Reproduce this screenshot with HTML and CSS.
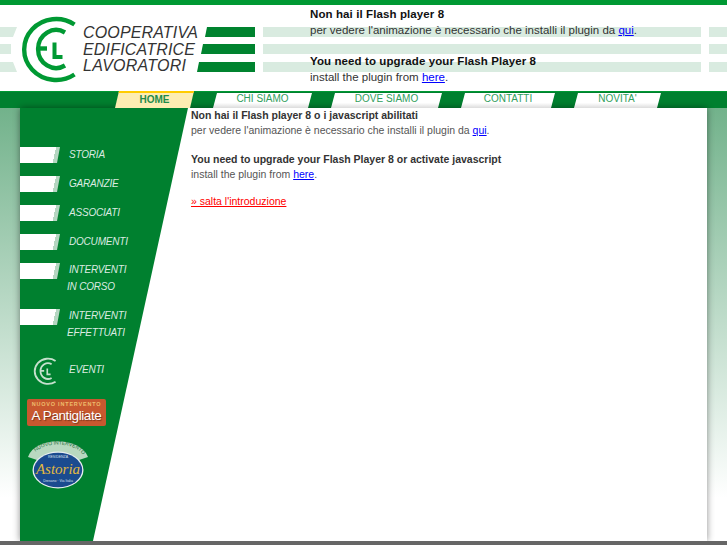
FILE: index.html
```html
<!DOCTYPE html>
<html lang="it">
<head>
    <meta charset="UTF-8">
    <title>Cooperativa Edificatrice Lavoratori</title>
    <link rel="stylesheet" href="styles.css">
</head>
<body>

    <!-- Logo mark, used in header and sidebar -->
    <svg class="defs" width="0" height="0">
        <symbol id="cel-mark" viewBox="20 15 58 70">
            <g fill="none" stroke="currentColor" stroke-width="4.4">
                <path d="M74.5 24.5A32 30.5 0 1 0 74.5 74.5"/>
                <path d="M65 32.5A18 19 0 1 0 65 65.5"/>
                <path d="M38 48.5H47"/>
            </g>
            <path fill="currentColor" d="M52.5 42.5H56.5V55H62.5V59H52.5Z"/>
        </symbol>
    </svg>

    <div class="topbar"></div>

    <!-- Header -->
    <div class="header">
        <svg class="logo" width="263" height="86" viewBox="0 5 263 86">
            <rect x="0" y="5" width="263" height="86" fill="#fff"/>
            <polygon points="0,27 17,27 13,37 0,37" fill="#d9ebe0"/>
            <polygon points="0,44 11,44 11,54 0,54" fill="#d9ebe0"/>
            <polygon points="0,62 13,62 17,72 0,72" fill="#d9ebe0"/>
            <use href="#cel-mark" x="20" y="15" width="58" height="70" color="#009933"/>
            <text class="logo-text" x="83" y="38" textLength="115">COOPERATIVA</text>
            <text class="logo-text" x="83" y="55" textLength="112">EDIFICATRICE</text>
            <text class="logo-text" x="83" y="71" textLength="103">LAVORATORI</text>
            <polygon points="207,27 255,27 255,37 205,37" fill="#00832f"/>
            <polygon points="203,44 255,44 255,54 201,54" fill="#00832f"/>
            <polygon points="199,62 255,62 255,72 197,72" fill="#00832f"/>
        </svg>
        <div class="flash-note">
            <p><strong>Non hai il Flash player 8</strong><br>
            per vedere l'animazione è necessario che installi il plugin da <a href="#">qui</a>.</p>
            <p><strong>You need to upgrade your Flash Player 8</strong><br>
            install the plugin from <a href="#">here</a>.</p>
        </div>
    </div>

    <!-- Navbar -->
    <div class="navbar">
        <a href="#" class="tab active">HOME</a>
        <a href="#" class="tab">CHI SIAMO</a>
        <a href="#" class="tab">DOVE SIAMO</a>
        <a href="#" class="tab">CONTATTI</a>
        <a href="#" class="tab">NOVITA'</a>
    </div>

    <div class="page">
        <div class="content">

            <!-- Sidebar -->
            <div class="sidebar">
                <a href="#" class="side-item"><span class="flag"></span><span class="side-label">STORIA</span></a>
                <a href="#" class="side-item"><span class="flag"></span><span class="side-label">GARANZIE</span></a>
                <a href="#" class="side-item"><span class="flag"></span><span class="side-label">ASSOCIATI</span></a>
                <a href="#" class="side-item"><span class="flag"></span><span class="side-label">DOCUMENTI</span></a>
                <a href="#" class="side-item"><span class="flag"></span><span class="side-label two-lines">INTERVENTI<span class="second-line">IN CORSO</span></span></a>
                <a href="#" class="side-item"><span class="flag"></span><span class="side-label two-lines">INTERVENTI<span class="second-line">EFFETTUATI</span></span></a>

                <a href="#" class="side-event">
                    <svg class="event-mark" width="26" height="29"><use href="#cel-mark" width="26" height="29"/></svg>
                    <span class="side-label">EVENTI</span>
                </a>

                <a href="#" class="promo-pantigliate">
                    <span class="promo-small">NUOVO INTERVENTO</span>
                    <span class="promo-big">A Pantigliate</span>
                </a>

                <svg class="promo-astoria" width="62" height="50" viewBox="0 0 62 50">
                    <path d="M1 17C8 -4 53 -4 61 17L52 20H10Z" fill="#b9d8c0"/>
                    <path id="astoria-arc" d="M6 15C15 1 47 1 56 15" fill="none"/>
                    <text class="astoria-arc-text"><textPath href="#astoria-arc" startOffset="4">NUOVO INTERVENTO</textPath></text>
                    <ellipse cx="31" cy="30" rx="25.5" ry="18.5" fill="#e8eef0"/>
                    <ellipse cx="31" cy="30" rx="24.2" ry="17.2" fill="#1b4b8f"/>
                    <text class="astoria-small" x="31" y="18" text-anchor="middle">RESIDENZA</text>
                    <text class="astoria-name" x="31" y="34" text-anchor="middle">Astoria</text>
                    <text class="astoria-small" x="31" y="42" text-anchor="middle">Dresano · Via Italia</text>
                </svg>
            </div>

            <!-- Main Content -->
            <div class="main">
                <p><strong>Non hai il Flash player 8 o i javascript abilitati</strong><br>
                per vedere l'animazione è necessario che installi il plugin da <a href="#">qui</a>.</p>
                <p><strong>You need to upgrade your Flash Player 8 or activate javascript</strong><br>
                install the plugin from <a href="#">here</a>.</p>
                <p class="skip"><a href="#">» salta l'introduzione</a></p>
            </div>
        </div>
    </div>

    <div class="bottombar"></div>

</body>
</html>
```

FILE: styles.css
```css
:root {
    --green: #009933;
    --green-dark: #00802f;
    --pale: #d9ebe0;
    --side-text: #dcebe1;
}

* {
    margin: 0;
    padding: 0;
    box-sizing: border-box;
}

body {
    font-family: 'Liberation Sans', Arial, sans-serif;
    background: #fff;
    height: 545px;
    overflow: hidden;
}

a {
    color: #0000ff;
}

.defs {
    display: block;
    height: 0;
}

.topbar {
    height: 5px;
    background: var(--green);
}

.header {
    height: 86px;
    display: flex;
    background:
        linear-gradient(#fff, #fff) 701px 0 / 8px 100% no-repeat,
        linear-gradient(var(--pale), var(--pale)) 0 22px / 100% 10px no-repeat,
        linear-gradient(var(--pale), var(--pale)) 0 39px / 100% 10px no-repeat,
        linear-gradient(var(--pale), var(--pale)) 0 57px / 100% 10px no-repeat;
}

.logo {
    display: block;
    flex: none;
}

.logo-text {
    font-family: 'Liberation Sans', Arial, sans-serif;
    font-style: italic;
    font-size: 16px;
    fill: #333;
}

.flash-note {
    margin-left: 47px;
    padding-top: 1px;
    font-size: 11.5px;
    line-height: 16px;
    color: #333;
}

.flash-note strong {
    color: #111;
    letter-spacing: 0.1px;
}

.flash-note p + p {
    margin-top: 15px;
}

.navbar {
    height: 17px;
    padding: 2px 0 0 115px;
    display: grid;
    grid-template-columns: 79px 99px 111px 94px 87px;
    gap: 19px;
    background: var(--green-dark);
    box-shadow: inset 0 1px 0 var(--green);
}

.tab {
    display: block;
    font-size: 10px;
    line-height: 11px;
    text-align: center;
    text-decoration: none;
    color: #2f9e5c;
    background: linear-gradient(#fff 65%, #dcdcdc);
    clip-path: polygon(4px 0, 100% 0, calc(100% - 4px) 100%, 0 100%);
}

.tab.active {
    margin-top: -2px;
    padding-top: 1px;
    font-weight: bold;
    color: #1f8a4a;
    border-top: 2px solid #ffcc00;
    background: #fdedb2;
}

.page {
    height: 433px;
    padding: 0 20px;
    background: linear-gradient(#72b28b, #fff 90%);
}

.content {
    height: 100%;
    display: flex;
    background: #fff;
    box-shadow: 0 0 7px rgba(0, 0, 0, 0.45);
}

.sidebar {
    flex: none;
    width: 168px;
    padding-top: 39px;
    display: flex;
    flex-direction: column;
    align-items: flex-start;
    background: var(--green-dark);
    clip-path: polygon(0 0, 100% 0, 73px 100%, 0 100%);
}

.side-item {
    display: flex;
    gap: 9px;
    margin-bottom: 13px;
    text-decoration: none;
}

.flag {
    flex: none;
    width: 40px;
    height: 16px;
    background: linear-gradient(101.6deg, #fff 35.3px, #b5d6c1 35.3px);
    clip-path: polygon(0 0, 100% 0, 37px 100%, 0 100%);
}

.side-label {
    margin-top: -1px;
    font-size: 10px;
    font-style: italic;
    letter-spacing: -0.2px;
    line-height: 17px;
    color: var(--side-text);
    white-space: nowrap;
}

.two-lines {
    margin: -2px 0 1px;
}

.second-line {
    display: block;
    margin-left: -2px;
}

.side-event {
    display: flex;
    align-items: center;
    gap: 11px;
    margin: 2px 0 0 12px;
    text-decoration: none;
}

.side-event .side-label {
    margin: 0 0 5px;
}

.event-mark {
    display: block;
    color: #c5e0cd;
}

.promo-pantigliate {
    display: block;
    width: 79px;
    height: 27px;
    margin: 13px 0 0 7px;
    padding-top: 2px;
    background: #c8582f;
    border-radius: 2px;
    text-align: center;
    text-decoration: none;
}

.promo-small {
    display: block;
    font-size: 5.5px;
    font-weight: bold;
    line-height: 7px;
    letter-spacing: 0.8px;
    color: #eebd6c;
}

.promo-big {
    display: block;
    margin-top: 1px;
    font-size: 13.5px;
    line-height: 14px;
    letter-spacing: -0.4px;
    color: #fff;
    text-shadow: 1px 1px 1px rgba(0, 0, 0, 0.4);
}

.promo-astoria {
    display: block;
    margin: 14px 0 0 7px;
}

.astoria-arc-text {
    font-size: 5px;
    fill: #1c6d39;
}

.astoria-small {
    font-size: 3.5px;
    fill: #d8e2ee;
}

.astoria-name {
    font-family: 'Liberation Serif', serif;
    font-style: italic;
    font-size: 15px;
    fill: #e2b93f;
}

.main {
    flex: 1;
    padding-left: 3px;
    font-size: 10.5px;
    line-height: 15px;
    color: #555;
}

.main strong {
    color: #333;
}

.main p + p {
    margin-top: 14px;
}

.main .skip {
    margin-top: 12px;
}

.skip a {
    color: #ff0000;
}

.bottombar {
    height: 4px;
    background: #666;
}
```
